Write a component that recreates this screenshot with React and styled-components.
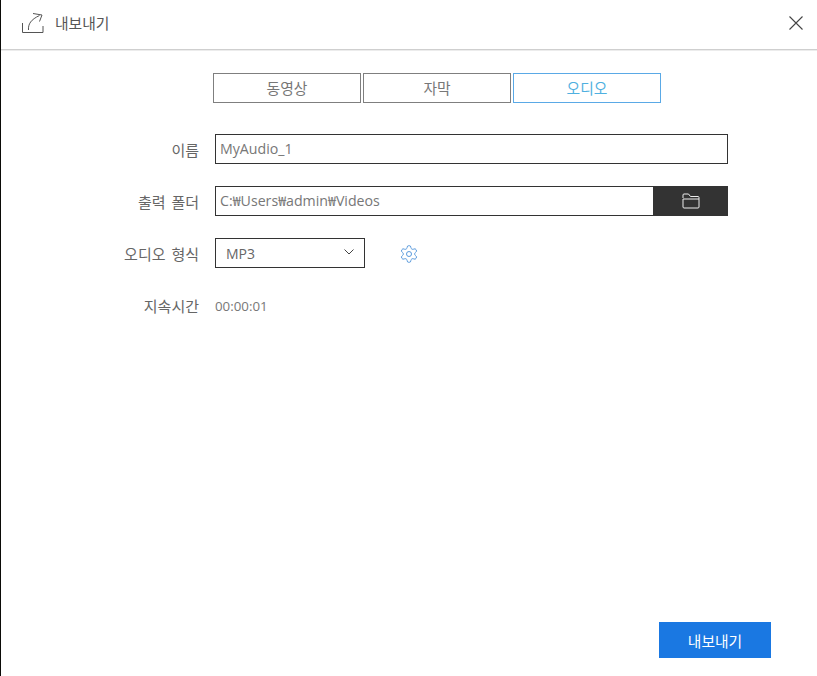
import React from 'react';
import styled, { createGlobalStyle } from 'styled-components';

const Global = createGlobalStyle`
  html, body { margin: 0; padding: 0; background: #fff; }
  body { font-family: "Open Sans", "Noto Sans CJK KR", sans-serif; overflow: hidden; }
  * { box-sizing: border-box; }
`;
const Window = styled.div`
  width: 817px; height: 676px; background: #fff;
  border-left: 1px solid #0b0b08;
  display: flex; flex-direction: column;
`;
const Header = styled.header`
  height: 51px; flex: none;
  display: flex; align-items: center;
  padding: 0 14px 4px 21px;
  border-bottom: 1px solid #ececec;
  box-shadow: inset 0 -1px 0 #cfcfcf;
`;
const Title = styled.h1`
  margin: 0 0 0 11px; font-size: 14.8px; font-weight: 400; color: #555;
  flex: 1; line-height: 18px;
`;
const IconBtn = styled.button`
  border: 0; background: none; padding: 0; display: flex; cursor: pointer;
`;
const Tabs = styled.nav`
  display: flex; gap: 2px; justify-content: flex-start;
  margin: 22px 0 0 212px;
`;
const Tab = styled.button`
  width: 148px; height: 30px; background: #fff; padding: 0 0 1px;
  border: 1px solid ${p => (p.$active ? '#5aa9e6' : '#7f7f7f')};
  color: ${p => (p.$active ? '#4fb0e0' : '#777')};
  font: 400 14.8px "Open Sans", "Noto Sans CJK KR", sans-serif;
`;
const Form = styled.div`
  display: flex; flex-direction: column; gap: 22px;
  margin-top: 31px; padding-left: 214px; padding-right: 89px;
  position: relative;
`;
const Row = styled.div`
  display: flex; align-items: center; height: 30px; position: relative;
`;
const Label = styled.label`
  position: absolute; right: 100%; margin-right: 16px; white-space: nowrap;
  font-size: 15px; color: #666; word-spacing: 2px;
`;
const TextBox = styled.div`
  flex: 1; height: 100%; border: 1px solid #333; background: #fff;
  display: flex; align-items: center; padding: 0 0 2px 4px;
  font-size: 14.2px; color: #777;
`;
const FolderBtn = styled.button`
  width: 74px; height: 100%; border: 0; background: #333; padding: 0;
  display: flex; align-items: center; justify-content: center;
`;
const Select = styled.div`
  width: 150px; height: 100%; border: 1px solid #333;
  display: flex; align-items: center; justify-content: space-between;
  padding: 1px 10px 0 10px; font-size: 14px; color: #666;
`;
const ChevronWrap = styled.span`
  display: flex; margin-bottom: 4px;
`;
const Gear = styled.button`
  border: 0; background: none; padding: 2px 0 0; margin-left: 34px; display: flex;
`;
const Value = styled.span`
  font-size: 13.3px; color: #777; padding-top: 1px;
`;
const Footer = styled.footer`
  margin-top: auto; padding: 0 46px 18px 0; display: flex; justify-content: flex-end;
`;
const Export = styled.button`
  width: 112px; height: 36px; border: 0; background: #1a78e2; color: #fff;
  font: 400 14.8px "Open Sans", "Noto Sans CJK KR", sans-serif;
`;

const ExportIcon = () => (
  <svg width="22" height="22" viewBox="0 0 22 22" fill="none" stroke="#555" strokeWidth="1">
    <path d="M0.5 11V20.5H21V14" />
    <path d="M6.5 18C6 12 9 7.5 17.5 3.5" />
    <path d="M11 1.5L20 3L17.5 9.5" />
  </svg>
);
const CloseIcon = () => (
  <svg width="14" height="14" viewBox="0 0 14 14" stroke="#444" strokeWidth="1.1" fill="none">
    <path d="M0.5 0.5L13.5 13.5M13.5 0.5L0.5 13.5" />
  </svg>
);
const FolderIcon = () => (
  <svg width="18" height="16" viewBox="0 0 18 16" fill="none" stroke="#eee" strokeWidth="1" strokeLinejoin="round">
    <path d="M1 5V2C1 1.2 1.5 1 2 1H6.5L8.5 3.5H16C16.6 3.5 17 3.9 17 4.5V14C17 14.6 16.6 15 16 15H2C1.4 15 1 14.6 1 14V6H17" />
  </svg>
);
const Chevron = () => (
  <svg width="10" height="6" viewBox="0 0 10 6" fill="none" stroke="#444" strokeWidth="1">
    <path d="M0.5 0.5L5 5L9.5 0.5" />
  </svg>
);
const GearIcon = () => (
  <svg width="20" height="20" viewBox="0 0 24 24" fill="none" stroke="#4a90d9" strokeWidth="1.1" strokeLinejoin="round">
    <path d="M12.22 2h-.44a2 2 0 0 0-2 2v.18a2 2 0 0 1-1 1.73l-.43.25a2 2 0 0 1-2 0l-.15-.08a2 2 0 0 0-2.73.73l-.22.38a2 2 0 0 0 .73 2.73l.15.1a2 2 0 0 1 1 1.72v.51a2 2 0 0 1-1 1.74l-.15.09a2 2 0 0 0-.73 2.73l.22.38a2 2 0 0 0 2.73.73l.15-.08a2 2 0 0 1 2 0l.43.25a2 2 0 0 1 1 1.73V20a2 2 0 0 0 2 2h.44a2 2 0 0 0 2-2v-.18a2 2 0 0 1 1-1.73l.43-.25a2 2 0 0 1 2 0l.15.08a2 2 0 0 0 2.73-.73l.22-.39a2 2 0 0 0-.73-2.73l-.15-.08a2 2 0 0 1-1-1.74v-.5a2 2 0 0 1 1-1.74l.15-.09a2 2 0 0 0 .73-2.73l-.22-.38a2 2 0 0 0-2.73-.73l-.15.08a2 2 0 0 1-2 0l-.43-.25a2 2 0 0 1-1-1.73V4a2 2 0 0 0-2-2z" />
    <circle cx="12" cy="12" r="3" />
  </svg>
);

export default function App() {
  return (
    <Window>
      <Global />
      <Header>
        <ExportIcon />
        <Title>내보내기</Title>
        <IconBtn aria-label="close"><CloseIcon /></IconBtn>
      </Header>
      <Tabs>
        <Tab>동영상</Tab>
        <Tab>자막</Tab>
        <Tab $active>오디오</Tab>
      </Tabs>
      <Form>
        <Row>
          <Label>이름</Label>
          <TextBox>MyAudio_1</TextBox>
        </Row>
        <Row>
          <Label>출력 폴더</Label>
          <TextBox>C:₩Users₩admin₩Videos</TextBox>
          <FolderBtn aria-label="folder"><FolderIcon /></FolderBtn>
        </Row>
        <Row>
          <Label>오디오 형식</Label>
          <Select>MP3<ChevronWrap><Chevron /></ChevronWrap></Select>
          <Gear aria-label="settings"><GearIcon /></Gear>
        </Row>
        <Row>
          <Label>지속시간</Label>
          <Value>00:00:01</Value>
        </Row>
      </Form>
      <Footer><Export>내보내기</Export></Footer>
    </Window>
  );
}
